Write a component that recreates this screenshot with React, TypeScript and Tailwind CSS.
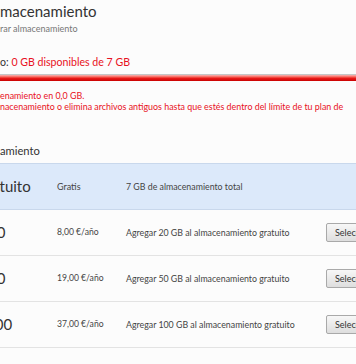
const font = { fontFamily: 'Lato, "Open Sans", sans-serif' };

interface Plan {
  name: string;
  nameOffset: string;
  price: string;
  desc: string;
}

const plans: Plan[] = [
  {
    name: '20',
    nameOffset: 'ml-[-12px]',
    price: '8,00 €/año',
    desc: 'Agregar 20 GB al almacenamiento gratuito',
  },
  {
    name: '50',
    nameOffset: 'ml-[-12px]',
    price: '19,00 €/año',
    desc: 'Agregar 50 GB al almacenamiento gratuito',
  },
  {
    name: '100',
    nameOffset: 'ml-[-14px]',
    price: '37,00 €/año',
    desc: 'Agregar 100 GB al almacenamiento gratuito',
  },
];

const PlanRow: React.FC<{ plan: Plan }> = ({ plan }) => (
  <div className="flex items-center h-[46px] border-b border-[#e3e3e3] whitespace-nowrap">
    <div className="w-[57px] shrink-0 overflow-hidden">
      <span className={`block text-[15px] text-[#333] ${plan.nameOffset}`}>
        {plan.name}
      </span>
    </div>
    <div className="w-[69px] shrink-0 text-[8.6px] text-[#444]">
      {plan.price}
    </div>
    <div className="w-[200px] shrink-0 text-[8.8px] text-[#444]">
      {plan.desc}
    </div>
    <button className="shrink-0 h-[19px] pl-[8px] pr-[8px] border border-[#a9a9a9] rounded-[2px] bg-gradient-to-b from-[#f7f7f7] to-[#dedede] text-[9px] text-[#333] leading-none">
      Seleccionar
    </button>
  </div>
);

export default function App() {
  return (
    <div
      className="w-[356px] h-[364px] overflow-hidden bg-[#fcfcfc]"
      style={font}
    >
      <div className="h-[22px] text-[15px] leading-[22px] text-[#333] whitespace-nowrap">
        macenamiento
      </div>
      <div className="h-[14px] text-[9px] leading-[14px] text-[#777] whitespace-nowrap">
        rar almacenamiento
      </div>

      <div className="mt-[18px] h-[16px] text-[10.6px] leading-[16px] whitespace-nowrap">
        <span className="text-[#333]">o: </span>
        <span className="text-[#e81123]">0 GB disponibles de 7 GB</span>
      </div>

      <div className="mt-[4px] h-[7px] border-t border-[#c6c6c6] bg-gradient-to-b from-[#f7b2b2] via-[#ee1c1c] to-[#c80000]" />

      <div className="mt-[9px] text-[8.9px] leading-[11px] text-[#e81123] whitespace-nowrap">
        <div className="h-[11px]">enamiento en 0,0 GB.</div>
        <div className="h-[11px]">
          nacenamiento o elimina archivos antiguos hasta que estés dentro del
          límite de tu plan de
        </div>
      </div>

      <div className="mt-[31px] h-[16px] text-[11.2px] leading-[16px] text-[#333] whitespace-nowrap">
        amiento
      </div>

      <div className="mt-[4px]">
        <div className="flex items-center h-[47px] bg-[#dce9fa] border-y border-[#c9d8ec] whitespace-nowrap">
          <div className="w-[57px] shrink-0 overflow-hidden">
            <span className="block text-[15px] text-[#333] ml-[-24px]">
              Gratuito
            </span>
          </div>
          <div className="w-[69px] shrink-0 text-[9px] text-[#444]">
            Gratis
          </div>
          <div className="text-[8.8px] text-[#444]">
            7 GB de almacenamiento total
          </div>
        </div>
        {plans.map((plan) => (
          <PlanRow key={plan.price} plan={plan} />
        ))}
      </div>
    </div>
  );
}
